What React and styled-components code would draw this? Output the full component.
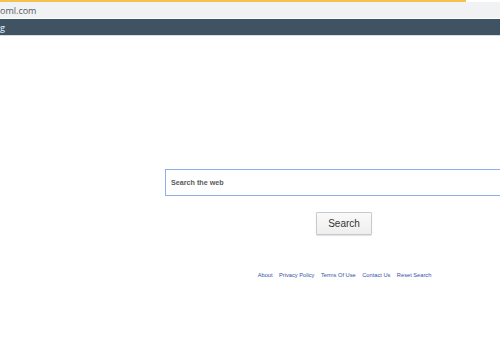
import React from "react";
import styled, { createGlobalStyle } from "styled-components";

const Global = createGlobalStyle`
  html, body { margin: 0; padding: 0; background: #fff; overflow: hidden; }
  body { font-family: "Liberation Sans", Arial, sans-serif; width: 500px; height: 350px; }
`;

const Page = styled.div`
  width: 500px;
  height: 350px;
  display: flex;
  flex-direction: column;
  overflow: hidden;
  background: #fff;
`;

const Accent = styled.div`
  height: 2px;
  width: 466px;
  background: #f3c14e;
`;

const AddressBar = styled.div`
  height: 16px;
  background: #f0f2f4;
  display: flex;
  align-items: center;
  font-family: "Open Sans", "Liberation Sans", sans-serif;
  font-size: 9px;
  color: #555a60;
  margin-bottom: 1px;
`;

const NavBar = styled.div`
  height: 16px;
  background: #3f5362;
  border-bottom: 1px solid #d8dde2;
  display: flex;
  align-items: center;
  font-family: "Open Sans", "Liberation Sans", sans-serif;
  font-size: 9px;
  font-weight: 600;
  color: #cfe0f0;
`;

const Main = styled.main`
  width: 358px;
  margin-left: 165px;
  margin-top: 133px;
  display: flex;
  flex-direction: column;
  align-items: center;
`;

const SearchInput = styled.input`
  box-sizing: border-box;
  width: 358px;
  height: 27px;
  border: 1px solid #8eaee8;
  border-radius: 0;
  padding: 0 5px;
  font-family: "Liberation Sans", Arial, sans-serif;
  font-size: 7.2px;
  font-weight: bold;
  color: #555;
  outline: none;
  &::placeholder { color: #5a5a5a; opacity: 1; }
`;

const SearchButton = styled.button`
  margin-top: 16px;
  width: 56px;
  height: 23px;
  border: 1px solid #c9c9c9;
  border-radius: 1px;
  background: linear-gradient(#fafafa, #eeeeee);
  box-shadow: 0 1px 1px rgba(0,0,0,0.12);
  font-family: "Liberation Sans", Arial, sans-serif;
  font-size: 10px;
  color: #333;
  padding: 0;
`;

const Footer = styled.nav`
  margin-top: 37px;
  margin-left: 1px;
  display: flex;
  gap: 6.5px;
  font-family: "Liberation Sans", Arial, sans-serif;
  font-size: 5.7px;
`;

const FooterLink = styled.a`
  color: #3450a8;
  text-decoration: none;
`;

export default function App() {
  return (
    <Page>
      <Global />
      <Accent />
      <AddressBar>oml.com</AddressBar>
      <NavBar>g</NavBar>
      <Main>
        <SearchInput placeholder="Search the web" />
        <SearchButton>Search</SearchButton>
        <Footer>
          <FooterLink href="#">About</FooterLink>
          <FooterLink href="#">Privacy Policy</FooterLink>
          <FooterLink href="#">Terms Of Use</FooterLink>
          <FooterLink href="#">Contact Us</FooterLink>
          <FooterLink href="#">Reset Search</FooterLink>
        </Footer>
      </Main>
    </Page>
  );
}
